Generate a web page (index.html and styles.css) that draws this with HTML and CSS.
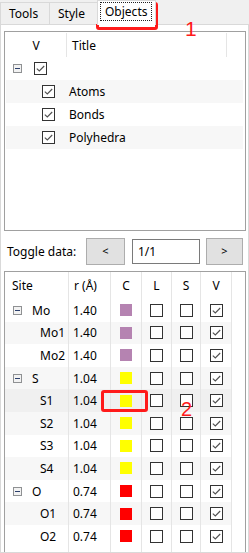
FILE: index.html
```html
<!DOCTYPE html>
<html>
<head>
<meta charset="utf-8">
<link rel="stylesheet" href="styles.css">
</head>
<body>
<div class="tabs">
  <div class="tab t-tools">Tools</div>
  <div class="tab t-style">Style</div>
  <div class="tab t-objects active"><span class="focus">Objects</span></div>
</div>
<div class="pane">
  <div class="tree">
    <div class="thead">
      <div class="th th-v">V</div>
      <div class="th th-title">Title</div>
      <div class="th th-fill"></div>
    </div>
    <div class="trow root">
      <svg class="exp" viewBox="0 0 9 9"><use href="#exp"/></svg>
      <svg class="cb" viewBox="0 0 13 13"><use href="#cb-on"/></svg>
    </div>
    <div class="trow child alt"><svg class="cb" viewBox="0 0 13 13"><use href="#cb-on"/></svg><span class="lbl">Atoms</span></div>
    <div class="trow child"><svg class="cb" viewBox="0 0 13 13"><use href="#cb-on"/></svg><span class="lbl">Bonds</span></div>
    <div class="trow child alt"><svg class="cb" viewBox="0 0 13 13"><use href="#cb-on"/></svg><span class="lbl">Polyhedra</span></div>
  </div>

  <div class="toggle">
    <span class="tlabel">Toggle data:</span>
    <button class="btn prev">&lt;</button>
    <div class="field">1/1</div>
    <button class="btn next">&gt;</button>
  </div>

  <div class="sites">
    <div class="srow shead">
      <div class="c h-site">Site</div>
      <div class="c h-r">r (Å)</div>
      <div class="c ctr">C</div>
      <div class="c ctr">L</div>
      <div class="c ctr">S</div>
      <div class="c ctr">V</div>
      <div class="c fill"></div>
    </div>

    <div class="srow">
      <div class="c site parent"><svg class="exp" viewBox="0 0 9 9"><use href="#exp"/></svg><span>Mo</span></div>
      <div class="c r">1.40</div>
      <div class="c ctr"><i class="sw mo"></i></div>
      <div class="c ctr"><svg class="cb" viewBox="0 0 13 13"><use href="#cb-off"/></svg></div>
      <div class="c ctr"><svg class="cb" viewBox="0 0 13 13"><use href="#cb-off"/></svg></div>
      <div class="c ctr"><svg class="cb" viewBox="0 0 13 13"><use href="#cb-on"/></svg></div>
      <div class="c fill"></div>
    </div>
    <div class="srow alt">
      <div class="c site kid">Mo1</div>
      <div class="c r">1.40</div>
      <div class="c ctr"><i class="sw mo"></i></div>
      <div class="c ctr"><svg class="cb" viewBox="0 0 13 13"><use href="#cb-off"/></svg></div>
      <div class="c ctr"><svg class="cb" viewBox="0 0 13 13"><use href="#cb-off"/></svg></div>
      <div class="c ctr"><svg class="cb" viewBox="0 0 13 13"><use href="#cb-on"/></svg></div>
      <div class="c fill"></div>
    </div>
    <div class="srow">
      <div class="c site kid">Mo2</div>
      <div class="c r">1.40</div>
      <div class="c ctr"><i class="sw mo"></i></div>
      <div class="c ctr"><svg class="cb" viewBox="0 0 13 13"><use href="#cb-off"/></svg></div>
      <div class="c ctr"><svg class="cb" viewBox="0 0 13 13"><use href="#cb-off"/></svg></div>
      <div class="c ctr"><svg class="cb" viewBox="0 0 13 13"><use href="#cb-on"/></svg></div>
      <div class="c fill"></div>
    </div>

    <div class="srow alt">
      <div class="c site parent"><svg class="exp" viewBox="0 0 9 9"><use href="#exp"/></svg><span>S</span></div>
      <div class="c r">1.04</div>
      <div class="c ctr"><i class="sw s"></i></div>
      <div class="c ctr"><svg class="cb" viewBox="0 0 13 13"><use href="#cb-off"/></svg></div>
      <div class="c ctr"><svg class="cb" viewBox="0 0 13 13"><use href="#cb-off"/></svg></div>
      <div class="c ctr"><svg class="cb" viewBox="0 0 13 13"><use href="#cb-on"/></svg></div>
      <div class="c fill"></div>
    </div>
    <div class="srow cur">
      <div class="c site kid">S1</div>
      <div class="c r">1.04</div>
      <div class="c ctr"><i class="sw s"></i></div>
      <div class="c ctr"><svg class="cb" viewBox="0 0 13 13"><use href="#cb-off"/></svg></div>
      <div class="c ctr"><svg class="cb" viewBox="0 0 13 13"><use href="#cb-off"/></svg></div>
      <div class="c ctr"><svg class="cb" viewBox="0 0 13 13"><use href="#cb-on"/></svg></div>
      <div class="c fill"></div>
    </div>
    <div class="srow alt">
      <div class="c site kid">S2</div>
      <div class="c r">1.04</div>
      <div class="c ctr"><i class="sw s"></i></div>
      <div class="c ctr"><svg class="cb" viewBox="0 0 13 13"><use href="#cb-off"/></svg></div>
      <div class="c ctr"><svg class="cb" viewBox="0 0 13 13"><use href="#cb-off"/></svg></div>
      <div class="c ctr"><svg class="cb" viewBox="0 0 13 13"><use href="#cb-on"/></svg></div>
      <div class="c fill"></div>
    </div>
    <div class="srow">
      <div class="c site kid">S3</div>
      <div class="c r">1.04</div>
      <div class="c ctr"><i class="sw s"></i></div>
      <div class="c ctr"><svg class="cb" viewBox="0 0 13 13"><use href="#cb-off"/></svg></div>
      <div class="c ctr"><svg class="cb" viewBox="0 0 13 13"><use href="#cb-off"/></svg></div>
      <div class="c ctr"><svg class="cb" viewBox="0 0 13 13"><use href="#cb-on"/></svg></div>
      <div class="c fill"></div>
    </div>
    <div class="srow alt">
      <div class="c site kid">S4</div>
      <div class="c r">1.04</div>
      <div class="c ctr"><i class="sw s"></i></div>
      <div class="c ctr"><svg class="cb" viewBox="0 0 13 13"><use href="#cb-off"/></svg></div>
      <div class="c ctr"><svg class="cb" viewBox="0 0 13 13"><use href="#cb-off"/></svg></div>
      <div class="c ctr"><svg class="cb" viewBox="0 0 13 13"><use href="#cb-on"/></svg></div>
      <div class="c fill"></div>
    </div>

    <div class="srow">
      <div class="c site parent"><svg class="exp" viewBox="0 0 9 9"><use href="#exp"/></svg><span>O</span></div>
      <div class="c r">0.74</div>
      <div class="c ctr"><i class="sw o"></i></div>
      <div class="c ctr"><svg class="cb" viewBox="0 0 13 13"><use href="#cb-off"/></svg></div>
      <div class="c ctr"><svg class="cb" viewBox="0 0 13 13"><use href="#cb-off"/></svg></div>
      <div class="c ctr"><svg class="cb" viewBox="0 0 13 13"><use href="#cb-on"/></svg></div>
      <div class="c fill"></div>
    </div>
    <div class="srow alt">
      <div class="c site kid">O1</div>
      <div class="c r">0.74</div>
      <div class="c ctr"><i class="sw o"></i></div>
      <div class="c ctr"><svg class="cb" viewBox="0 0 13 13"><use href="#cb-off"/></svg></div>
      <div class="c ctr"><svg class="cb" viewBox="0 0 13 13"><use href="#cb-off"/></svg></div>
      <div class="c ctr"><svg class="cb" viewBox="0 0 13 13"><use href="#cb-on"/></svg></div>
      <div class="c fill"></div>
    </div>
    <div class="srow">
      <div class="c site kid">O2</div>
      <div class="c r">0.74</div>
      <div class="c ctr"><i class="sw o"></i></div>
      <div class="c ctr"><svg class="cb" viewBox="0 0 13 13"><use href="#cb-off"/></svg></div>
      <div class="c ctr"><svg class="cb" viewBox="0 0 13 13"><use href="#cb-off"/></svg></div>
      <div class="c ctr"><svg class="cb" viewBox="0 0 13 13"><use href="#cb-on"/></svg></div>
      <div class="c fill"></div>
    </div>
    <div class="srow tail">
      <div class="c"></div><div class="c"></div><div class="c"></div><div class="c"></div><div class="c"></div><div class="c"></div><div class="c fill"></div>
    </div>
  </div>
</div>

<div class="anno box1"></div>
<div class="anno num1">1</div>
<div class="anno box2"></div>
<div class="anno num2">2</div>

<svg class="defs" width="0" height="0">
  <symbol id="cb-on" viewBox="0 0 13 13">
    <rect x="0.5" y="0.5" width="12" height="12" fill="#fff" stroke="#333"/>
    <polyline points="2.8,6.6 5.3,9 10.2,4" fill="none" stroke="#505050" stroke-width="1.1"/>
  </symbol>
  <symbol id="cb-off" viewBox="0 0 13 13">
    <rect x="0.5" y="0.5" width="12" height="12" fill="#fff" stroke="#333"/>
  </symbol>
  <symbol id="exp" viewBox="0 0 9 9">
    <rect x="0.5" y="0.5" width="8" height="8" fill="#f2f2f2" stroke="#8f9193"/>
    <line x1="2" y1="4.5" x2="7" y2="4.5" stroke="#2b3f6c"/>
  </symbol>
</svg>
</body>
</html>
```

FILE: styles.css
```css
* { box-sizing: border-box; }

html, body {
  margin: 0;
  padding: 0;
  width: 249px;
  height: 553px;
  overflow: hidden;
}

body {
  position: relative;
  background: #f0f0f0;
  font-family: "Noto Sans", "Open Sans", sans-serif;
  font-size: 12px;
  color: #000;
}

/* ---------- tabs ---------- */
.tabs {
  position: relative;
  z-index: 1;
  display: flex;
  align-items: flex-end;
  height: 24px;
}

.tab {
  display: flex;
  align-items: center;
  height: 22px;
  margin-right: -1px;
  padding-left: 8px;
  border: 1px solid #d9d9d9;
  border-bottom: none;
  background: #f0f0f0;
  line-height: 16px;
}

.t-tools { width: 50px; }
.t-style { width: 49px; }

.t-objects.active {
  width: 59px;
  height: 25px;
  margin-bottom: -1px;
  padding-left: 2px;
  padding-bottom: 3px;
  background: #fff;
}

.focus {
  display: inline-block;
  padding: 0 4px;
  border: 1px dotted #222;
  line-height: 17px;
}

/* ---------- pane ---------- */
.pane {
  height: 529px;
  padding: 6px 2px 0 3px;
  border: 1px solid #d9d9d9;
  background: #fff;
  overflow: hidden;
}

/* ---------- object tree ---------- */
.tree {
  height: 200px;
  border: 1px solid #a0a0a0;
  background: #fff;
}

.thead {
  display: grid;
  grid-template-columns: 62px 160px 1fr;
  height: 25px;
}

.th {
  display: flex;
  align-items: center;
  border-right: 1px solid #e5e5e5;
  margin: 1px 0 0;
}

.th-v { justify-content: center; padding-left: 1px; }
.th-title { padding-left: 5px; }
.th-fill { border-right: none; }

.trow {
  display: flex;
  align-items: center;
  height: 23px;
}

.trow.alt { background: #f7f7f7; margin-left: 1px; margin-right: 2px; }
.trow.alt.child { padding-left: 36px; }

.trow.root { padding-left: 8px; }
.trow.root .cb { margin-left: 12px; }

.trow.child { padding-left: 37px; }
.trow.child .lbl { margin-left: 14px; }

.exp { width: 9px; height: 9px; display: block; flex: none; }
.cb { width: 13px; height: 13px; display: block; flex: none; }

/* ---------- toggle row ---------- */
.toggle {
  display: flex;
  align-items: center;
  height: 40px;
  padding-left: 3px;
}

.tlabel { width: 79px; }

.btn {
  width: 39px;
  height: 27px;
  margin: 0 7px 0 0;
  padding: 0 0 2px;
  border: 1px solid #adadad;
  background: #e1e1e1;
  font-family: "Noto Sans", sans-serif;
  font-size: 11px;
  color: #000;
}

.btn.next { width: 37px; margin-right: 0; }

.field {
  width: 68px;
  height: 25px;
  margin-right: 6px;
  padding: 3px 0 0 5px;
  border: 1px solid #7a7a7a;
  background: #fff;
}

/* ---------- sites table ---------- */
.sites {
  height: 300px;
  border: 1px solid #a0a0a0;
  background: #fff;
}

.srow {
  display: grid;
  grid-template-columns: 64px 42px 31px 30px 29px 31px 1fr;
  height: 22.6px;
}

.srow.shead { height: 27px; }
.srow.tail { height: 20px; }

.c {
  display: flex;
  align-items: center;
  border-right: 1px solid #e5e5e5;
}

.c.fill { border-right: none; background: #fff; }

.srow.alt { background: #f7f7f7; }
.srow.cur { background: #f0f0f0; }

.h-site { padding-left: 7px; }
.h-r { padding-left: 5px; }
.ctr { justify-content: center; }

.site.parent { padding-left: 8px; }
.site.parent span { margin-left: 10px; }
.site.kid { padding-left: 35px; }
.r { padding-left: 4px; }

.sw {
  display: block;
  width: 12px;
  height: 12px;
}
.sw.mo { background: #b583b1; }
.sw.s { background: #ffff00; }
.sw.o { background: #ff0000; }

/* ---------- annotations ---------- */
.anno { position: absolute; }

.box1 {
  left: 96px;
  top: 2px;
  width: 62px;
  height: 28px;
  border: 3px solid #ff1a1a;
  border-radius: 3px;
}

.box2 {
  left: 101px;
  top: 390px;
  width: 47px;
  height: 22px;
  border: 3px solid #ff1a1a;
  border-radius: 3px;
}

.num1, .num2 {
  font-family: "Liberation Sans", Arial, sans-serif;
  line-height: 1;
  color: #ff1a1a;
}

.num1 { left: 185px; top: 18px; font-size: 21px; }
.num2 { left: 181px; top: 399px; font-size: 20px; }

.defs { position: absolute; width: 0; height: 0; overflow: hidden; }
```
